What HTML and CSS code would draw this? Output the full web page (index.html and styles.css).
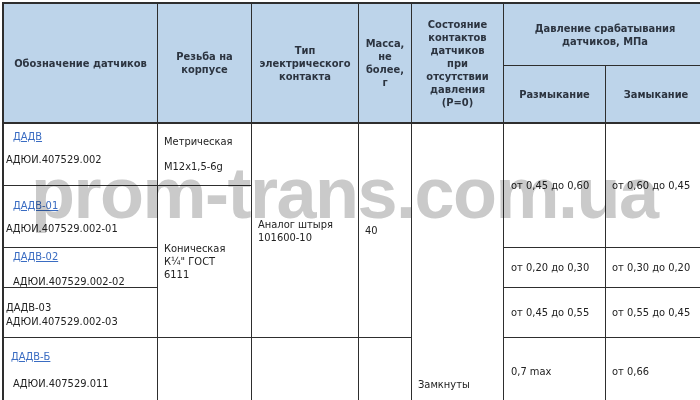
FILE: index.html
```html
<!DOCTYPE html>
<html lang="ru">
<head>
<meta charset="utf-8">
<title>Датчики ДАДВ</title>
<link rel="stylesheet" href="styles.css">
</head>
<body>
<div class="page">
  <div class="grid">
    <div class="hd c1 r-h">Обозначение датчиков</div>
    <div class="hd c2 r-h">Резьба на<br>корпусе</div>
    <div class="hd c3 r-h">Тип<br>электрического<br>контакта</div>
    <div class="hd c4 r-h">Масса,<br>не<br>более,<br>г</div>
    <div class="hd c5 r-h">Состояние<br>контактов<br>датчиков<br>при<br>отсутствии<br>давления<br>(P=0)</div>
    <div class="hd c67 r-h1">Давление срабатывания<br>датчиков, МПа</div>
    <div class="hd c6 r-h2">Размыкание</div>
    <div class="hd c7 r-h2">Замыкание</div>

    <div class="cell c1 rA name-a">
      <a class="link ind" href="#">ДАДВ</a>
      <div class="code">АДЮИ.407529.002</div>
    </div>
    <div class="cell c1 rB name-b">
      <a class="link ind" href="#">ДАДВ-01</a>
      <div class="code">АДЮИ.407529.002-01</div>
    </div>
    <div class="cell c1 rC name-c">
      <a class="link ind" href="#">ДАДВ-02</a>
      <div class="code ind">АДЮИ.407529.002-02</div>
    </div>
    <div class="cell c1 rD name-d">
      <div>ДАДВ-03</div>
      <div>АДЮИ.407529.002-03</div>
    </div>
    <div class="cell c1 rE name-e">
      <a class="link" href="#">ДАДВ-Б</a>
      <div class="code ind">АДЮИ.407529.011</div>
    </div>

    <div class="cell c2 rA thread-a">
      <div>Метрическая</div>
      <div class="gap12">M12x1,5-6g</div>
    </div>
    <div class="cell c2 rBD mid">Коническая<br>К¼" ГОСТ<br>6111</div>
    <div class="cell c2 rE"></div>

    <div class="cell c3 rAD mid">Аналог штыря<br>101600-10</div>
    <div class="cell c3 rE"></div>

    <div class="cell c4 rAD mid">40</div>
    <div class="cell c4 rE"></div>

    <div class="cell c5 rAE state">Замкнуты</div>

    <div class="cell c6 rAB mid">от 0,45 до 0,60</div>
    <div class="cell c7 rAB mid">от 0,60 до 0,45</div>
    <div class="cell c6 rC mid">от 0,20 до 0,30</div>
    <div class="cell c7 rC mid">от 0,30 до 0,20</div>
    <div class="cell c6 rD mid">от 0,45 до 0,55</div>
    <div class="cell c7 rD mid">от 0,55 до 0,45</div>
    <div class="cell c6 rE mid">0,7 max</div>
    <div class="cell c7 rE mid">от 0,66</div>
  </div>
  <div class="watermark">prom-trans.com.ua</div>
</div>
</body>
</html>
```
FILE: styles.css
```css
html, body {
  margin: 0;
  padding: 0;
  background: #ffffff;
}
body {
  width: 700px;
  height: 400px;
  overflow: hidden;
  font-family: "DejaVu Sans Condensed", "DejaVu Sans", sans-serif;
  font-size: 11px;
  line-height: 13px;
  color: #222222;
}
.page {
  position: relative;
  width: 700px;
  height: 400px;
  overflow: hidden;
}
.grid {
  margin: 2px 0 0 2px;
  width: 704px;
  display: grid;
  grid-template-columns: 153px 93px 106px 52px 91px 101px 100px;
  grid-template-rows: 61px 57px 61px 61px 39px 49px 66px;
  gap: 1px;
  padding: 2px 0 0 2px;
  background: #2e2e2e;
}
.hd {
  background: #bdd4ea;
  font-weight: bold;
  color: #2c3440;
  text-align: center;
  display: flex;
  align-items: center;
  justify-content: center;
}
.cell {
  background: #ffffff;
  padding-left: 6px;
}
.mid {
  display: flex;
  flex-direction: column;
  justify-content: center;
}
.c1 { grid-column: 1; }
.c2 { grid-column: 2; }
.c3 { grid-column: 3; }
.c4 { grid-column: 4; }
.c5 { grid-column: 5; }
.c6 { grid-column: 6; padding-left: 7px; }
.c7 { grid-column: 7; }
.c67 { grid-column: 6 / 8; }
.hd.c6, .hd.c7 { padding-left: 0; }
.r-h { grid-row: 1 / 3; border-bottom: 1px solid #2e2e2e; }
.r-h1 { grid-row: 1; }
.r-h2 { grid-row: 2; border-bottom: 1px solid #2e2e2e; }
.rA { grid-row: 3; }
.rB { grid-row: 4; }
.rC { grid-row: 5; }
.rD { grid-row: 6; }
.rE { grid-row: 7; }
.rAB { grid-row: 3 / 5; }
.rBD { grid-row: 4 / 7; }
.rAD { grid-row: 3 / 7; }
.rAE { grid-row: 3 / 8; }

.cell.c1 { padding-left: 2px; }
.link {
  display: block;
  color: #3a6cc2;
  text-decoration: underline;
  width: max-content;
}
.ind { margin-left: 7px; }
.code { margin-top: 10px; }
.name-a { padding-top: 6px; }
.name-b { padding-top: 13px; }
.name-c { padding-top: 2px; }
.name-c .code { margin-top: 12px; }
.name-d { padding-top: 13px; line-height: 14px; }
.name-e { padding-top: 12px; }
.name-e .link { margin-left: 5px; }
.name-e .code { margin-top: 14px; }
.thread-a { padding-top: 11px; }
.gap12 { margin-top: 12px; }
.state { padding-top: 254px; }

.watermark {
  position: absolute;
  left: 31px;
  top: 148px;
  font-family: "Liberation Sans", Arial, sans-serif;
  font-weight: bold;
  font-size: 72px;
  line-height: 90px;
  letter-spacing: -1.5px;
  color: #cacaca;
  mix-blend-mode: multiply;
  white-space: nowrap;
  pointer-events: none;
}
```
